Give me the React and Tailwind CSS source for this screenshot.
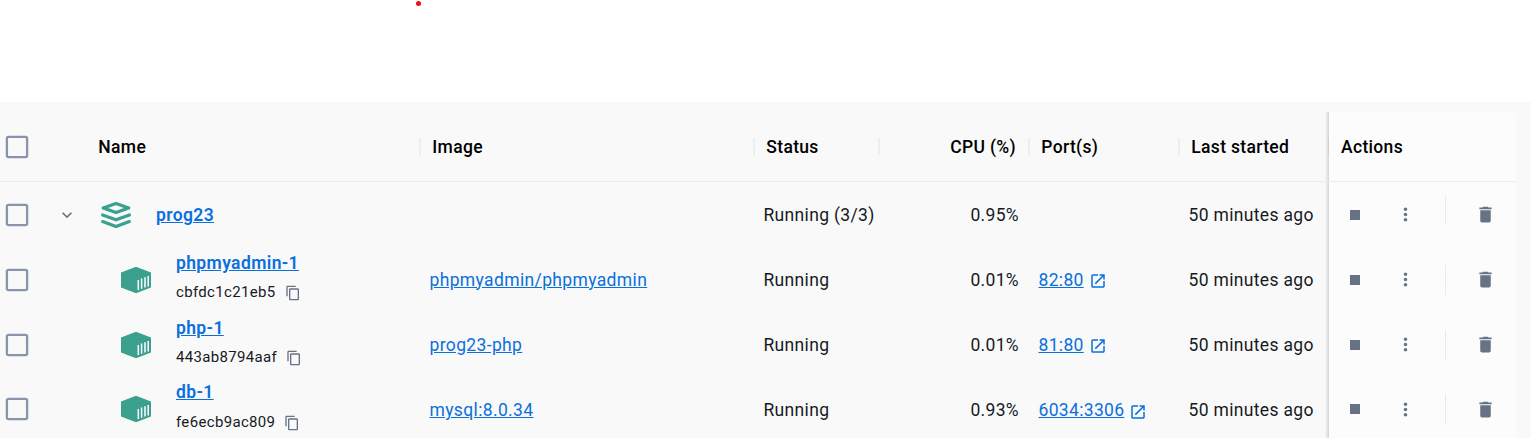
import { MdContentCopy, MdDelete, MdKeyboardArrowDown, MdMoreVert, MdOpenInNew } from "react-icons/md";

const COLUMNS = "grid grid-cols-[86px_334px_334px_125px_150px_150px_150px_187px]";

const EDGE_SHADOW =
  "relative before:absolute before:inset-y-0 before:-left-[4px] before:w-[4px] before:bg-linear-to-r before:from-transparent before:to-black/15";

const containers = [
  { name: "phpmyadmin-1", id: "cbfdc1c21eb5", image: "phpmyadmin/phpmyadmin", cpu: "0.01%", port: "82:80", height: "h-[65px]", gap: "mt-[4px]", cell: "" },
  { name: "php-1", id: "443ab8794aaf", image: "prog23-php", cpu: "0.01%", port: "81:80", height: "h-[65px]", gap: "mt-[4px]", cell: "" },
  { name: "db-1", id: "fe6ecb9ac809", image: "mysql:8.0.34", cpu: "0.93%", port: "6034:3306", height: "h-[64px]", gap: "mt-[5px]", cell: "pt-[2px]" },
];

function Checkbox() {
  return (
    <svg className="ml-[2px] size-[30px] shrink-0" viewBox="0 0 30 30" fill="none">
      <rect x="4.9" y="4.9" width="20.2" height="20.2" rx="1.6" stroke="#8993ab" strokeWidth="2.3" />
    </svg>
  );
}

function StackIcon() {
  return (
    <svg className="h-[28px] w-[32px]" viewBox="0 0 32 28" fill="none" stroke="#3ba08d" strokeWidth="3.2" strokeLinejoin="round" strokeLinecap="round">
      <path d="M16 2.4 28.8 7 16 11.6 3.2 7Z" />
      <path d="M2.6 14 16 18.8 29.4 14" />
      <path d="M2.6 20.6 16 25.4 29.4 20.6" />
    </svg>
  );
}

function ContainerIcon() {
  return (
    <svg className="h-[28px] w-[32px]" viewBox="0 0 32 28">
      <path d="M16 .8 31 6.6V21.4L16 27.2 1 21.4V6.6Z" fill="#3ba08d" />
      <path d="M18.3 13.9V24M21.6 12.6V22.8M25 11.3V21.6M28.2 10.1V20.4" stroke="#fff" strokeWidth="1.5" />
    </svg>
  );
}

function HeaderCell({ children, right = false }) {
  return (
    <div className={`relative flex items-center pl-[12.3px] pr-[13px] ${right ? "justify-end" : ""}`}>
      {children}
      <span className="absolute -right-px top-[26px] h-[17px] w-[2px] bg-[#eeeeee]" />
    </div>
  );
}

function Actions({ first = false }) {
  return (
    <div className={`${EDGE_SHADOW} flex items-center bg-[#fcfcfc] text-[#677285]`}>
      <span className="ml-[21px] size-[10px] bg-[#677285]" />
      <MdMoreVert className="ml-[34.5px] size-[21px]" />
      <span className={`ml-[29.5px] h-[30px] w-px bg-[#e9e9ea] ${first ? "-translate-y-[5px]" : ""}`} />
      <MdDelete className="ml-[29px] size-[21px]" />
    </div>
  );
}

function GroupRow() {
  return (
    <div className={`${COLUMNS} h-[65px]`}>
      <div className="flex items-center">
        <Checkbox />
        <MdKeyboardArrowDown className="ml-[25px] size-[20px] text-[#677285]" />
      </div>
      <div className="flex items-center pl-[14px]">
        <StackIcon />
        <a className="ml-[24px] font-semibold tracking-[0.38px] text-[#0a70dc] underline">prog23</a>
      </div>
      <div />
      <div className="flex items-center pl-[9.5px]">Running (3/3)</div>
      <div className="flex items-center justify-end pr-[10px]">0.95%</div>
      <div />
      <div className="flex items-center whitespace-nowrap pl-[9.5px]">50 minutes ago</div>
      <Actions first />
    </div>
  );
}

function ContainerRow({ item }) {
  return (
    <div className={`${COLUMNS} ${item.height}`}>
      <div className="flex items-center">
        <Checkbox />
      </div>
      <div className="flex items-center pl-[34px]">
        <ContainerIcon />
        <div className="ml-[24px] flex flex-col pb-[5px]">
          <a className="font-semibold leading-[26px] tracking-[0.38px] text-[#0a70dc] underline">{item.name}</a>
          <div className={`${item.gap} flex items-center text-[15px] leading-[24px] tracking-[0.33px]`}>
            {item.id}
            <MdContentCopy className="ml-[9px] mt-[1px] size-[16px] text-[#677285]" />
          </div>
        </div>
      </div>
      <div className={`flex items-center pl-[9.5px] ${item.cell}`}>
        <a className="tracking-[0.36px] text-[#0a70dc] underline">{item.image}</a>
      </div>
      <div className={`flex items-center pl-[9.5px] ${item.cell}`}>Running</div>
      <div className={`flex items-center justify-end pr-[10px] ${item.cell}`}>{item.cpu}</div>
      <div className={`flex items-center pl-[9.5px] text-[#0a70dc] ${item.cell}`}>
        <a className="underline">{item.port}</a>
        <MdOpenInNew className="ml-[5px] mt-[3px] size-[18px]" />
      </div>
      <div className={`flex items-center whitespace-nowrap pl-[9.5px] ${item.cell}`}>50 minutes ago</div>
      <Actions />
    </div>
  );
}

export default function App() {
  return (
    <div className="flex h-[438px] w-[1531px] flex-col overflow-hidden bg-white font-['Roboto',sans-serif] text-[17.5px] leading-[26px] tracking-[0.33px] text-[#17191e]">
      <div className="flex h-[102px] shrink-0 items-start pl-[416px]">
        <span className="mt-px size-[5px] rounded-full bg-[#e8101c]" />
      </div>
      <main className="flex-1 bg-[#f9f9f9] pt-[10px]">
        <div className="w-[1516px]">
          <div className={`${COLUMNS} h-[70px] border-b border-[#ececec] font-medium text-black`}>
            <div className="flex items-center">
              <Checkbox />
            </div>
            <HeaderCell>Name</HeaderCell>
            <HeaderCell>Image</HeaderCell>
            <HeaderCell>Status</HeaderCell>
            <HeaderCell right>CPU (%)</HeaderCell>
            <HeaderCell>Port(s)</HeaderCell>
            <HeaderCell>Last started</HeaderCell>
            <div className={`${EDGE_SHADOW} flex items-center rounded-tr-[5px] bg-[#fcfcfc] pl-[12px]`}>
              Actions
            </div>
          </div>
          <GroupRow />
          {containers.map((item) => (
            <ContainerRow key={item.id} item={item} />
          ))}
        </div>
      </main>
    </div>
  );
}
